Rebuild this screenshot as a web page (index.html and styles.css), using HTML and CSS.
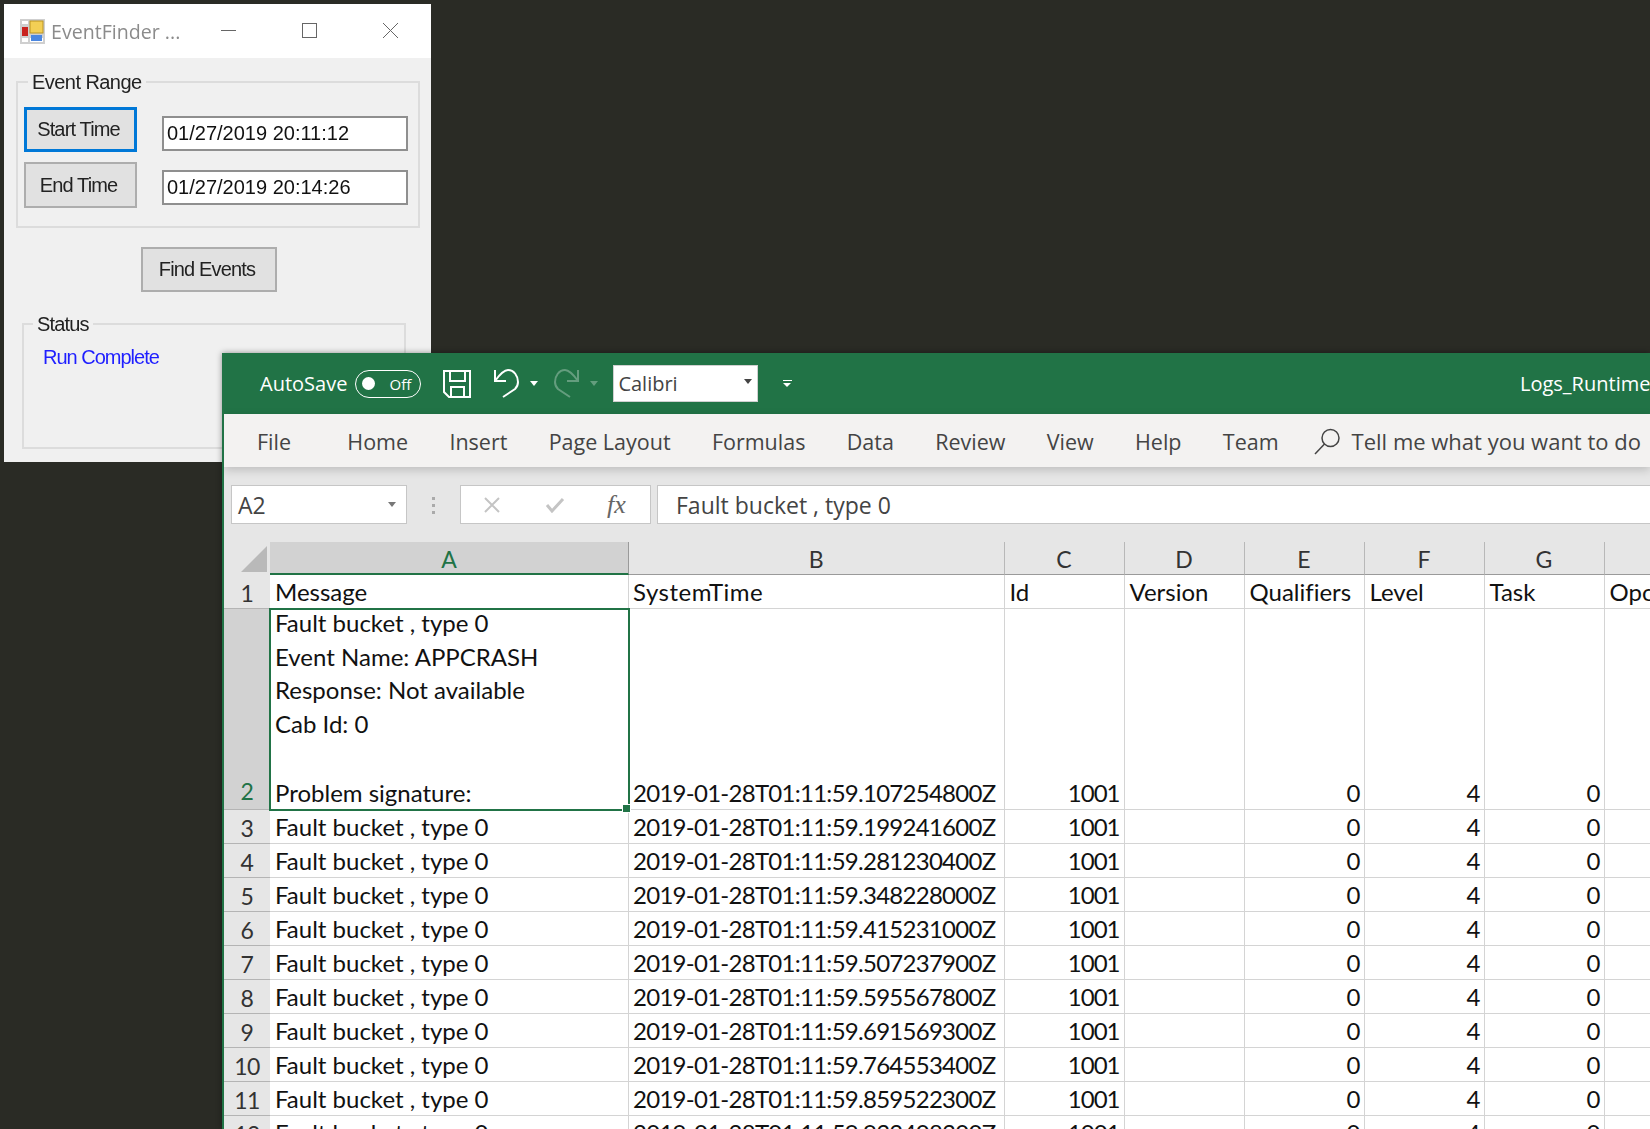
FILE: index.html
```html
<!DOCTYPE html>
<html lang="en">
<head>
<meta charset="utf-8">
<title>EventFinder and Excel</title>
<link rel="stylesheet" href="styles.css">
</head>
<body>
<section class="finder">
  <header class="finder-title">
    <svg class="finder-icon" viewBox="0 0 25 25" aria-hidden="true">
      <rect x="0" y="0" width="25" height="25" fill="#cfcfcf"/>
      <rect x="2" y="2" width="6" height="3" fill="#fff"/>
      <rect x="2" y="19" width="6" height="4" fill="#fff"/>
      <rect x="10" y="19" width="13" height="4" fill="#fff"/>
      <rect x="2" y="8" width="6" height="9" fill="#c9231f"/>
      <rect x="10" y="2" width="13" height="12" fill="#f3cf55" stroke="#bc9421"/>
      <rect x="11" y="16" width="11" height="6" fill="#4b86e0"/>
    </svg>
    <span class="finder-name">EventFinder ...</span>
    <span class="win-min"></span>
    <span class="win-max"></span>
    <svg class="win-close" viewBox="0 0 15 15" aria-hidden="true"><path d="M0 0L15 15M15 0L0 15"/></svg>
  </header>
  <div class="group group-range">
    <span class="legend legend-range">Event Range</span>
    <div class="range-grid">
      <button class="win-btn win-btn-focus">Start Time</button>
      <div class="date-box">01/27/2019 20:11:12</div>
      <button class="win-btn">End Time</button>
      <div class="date-box date-box-end">01/27/2019 20:14:26</div>
    </div>
  </div>
  <button class="win-btn find-btn">Find Events</button>
  <div class="group group-status">
    <span class="legend legend-status">Status</span>
    <p class="status-text">Run Complete</p>
  </div>
</section>

<section class="excel">
  <header class="xl-title">
    <span class="autosave">AutoSave</span>
    <span class="toggle"><i class="toggle-dot"></i><span>Off</span></span>
    <svg class="xl-save" viewBox="0 0 28 28" aria-hidden="true"><path d="M1 1H27V27H6L1 22ZM7 1V11H22V1M8 27V17H21V27"/></svg>
    <svg class="xl-undo" viewBox="0 0 27 29" aria-hidden="true"><path d="M2 1V12H13M2 12C7 5 11 1 15 1C21 1 25 7 25 13C25 16 24 18 22 20L10 28"/></svg>
    <i class="caret caret-white"></i>
    <svg class="xl-redo" viewBox="0 0 27 29" aria-hidden="true"><path d="M25 1V12H14M25 12C20 5 16 1 12 1C6 1 2 7 2 13C2 16 3 18 5 20L17 28"/></svg>
    <i class="caret caret-dim"></i>
    <div class="font-box"><span>Calibri</span><i class="caret caret-dark"></i></div>
    <div class="customize"><b></b><i class="caret caret-small"></i></div>
    <span class="doc-name">Logs_Runtime</span>
  </header>
  <nav class="xl-ribbon">
    <span class="tab tab-file">File</span>
    <span class="tab">Home</span>
    <span class="tab">Insert</span>
    <span class="tab">Page Layout</span>
    <span class="tab">Formulas</span>
    <span class="tab">Data</span>
    <span class="tab">Review</span>
    <span class="tab">View</span>
    <span class="tab">Help</span>
    <span class="tab">Team</span>
    <svg class="xl-search" viewBox="0 0 27 27" aria-hidden="true"><circle cx="16.5" cy="10" r="8.5"/><path d="M10.5 16L1 26"/></svg>
    <span class="tell">Tell me what you want to do</span>
  </nav>
  <div class="xl-formula">
    <div class="name-box"><span>A2</span><i class="caret caret-gray"></i></div>
    <div class="dots"><i></i><i></i><i></i></div>
    <div class="fx-box">
      <svg class="fx-x" viewBox="0 0 18 18" aria-hidden="true"><path d="M2 2L16 16M16 2L2 16"/></svg>
      <svg class="fx-check" viewBox="0 0 20 16" aria-hidden="true"><path d="M2 8L7 14L18 2"/></svg>
      <span class="fx">fx</span>
    </div>
    <div class="formula-input">Fault bucket , type 0</div>
  </div>
  <div class="sheet">
    <div class="corner"><i></i></div>
    <div class="col col-on">A</div><div class="col">B</div><div class="col">C</div><div class="col">D</div><div class="col">E</div><div class="col">F</div><div class="col">G</div><div class="col"></div>

    <div class="rh">1</div>
    <div class="c">Message</div><div class="c c-b c-sys">SystemTime</div><div class="c">Id</div><div class="c">Version</div><div class="c">Qualifiers</div><div class="c">Level</div><div class="c">Task</div><div class="c">Opc</div>

    <div class="rh rh-on">2</div>
    <div class="c c-sel">
      <div>Fault bucket , type 0</div>
      <div>Event Name: APPCRASH</div>
      <div>Response: Not available</div>
      <div>Cab Id: 0</div>
      <div class="blank"></div>
      <div>Problem signature:</div>
    </div>
    <div class="c c-b t">2019-01-28T01:11:59.107254800Z</div><div class="c n">1001</div><div class="c"></div><div class="c n">0</div><div class="c n">4</div><div class="c n">0</div><div class="c"></div>

    <div class="rh">3</div><div class="c">Fault bucket , type 0</div><div class="c c-b t">2019-01-28T01:11:59.199241600Z</div><div class="c n">1001</div><div class="c"></div><div class="c n">0</div><div class="c n">4</div><div class="c n">0</div><div class="c"></div>
    <div class="rh">4</div><div class="c">Fault bucket , type 0</div><div class="c c-b t">2019-01-28T01:11:59.281230400Z</div><div class="c n">1001</div><div class="c"></div><div class="c n">0</div><div class="c n">4</div><div class="c n">0</div><div class="c"></div>
    <div class="rh">5</div><div class="c">Fault bucket , type 0</div><div class="c c-b t">2019-01-28T01:11:59.348228000Z</div><div class="c n">1001</div><div class="c"></div><div class="c n">0</div><div class="c n">4</div><div class="c n">0</div><div class="c"></div>
    <div class="rh">6</div><div class="c">Fault bucket , type 0</div><div class="c c-b t">2019-01-28T01:11:59.415231000Z</div><div class="c n">1001</div><div class="c"></div><div class="c n">0</div><div class="c n">4</div><div class="c n">0</div><div class="c"></div>
    <div class="rh">7</div><div class="c">Fault bucket , type 0</div><div class="c c-b t">2019-01-28T01:11:59.507237900Z</div><div class="c n">1001</div><div class="c"></div><div class="c n">0</div><div class="c n">4</div><div class="c n">0</div><div class="c"></div>
    <div class="rh">8</div><div class="c">Fault bucket , type 0</div><div class="c c-b t">2019-01-28T01:11:59.595567800Z</div><div class="c n">1001</div><div class="c"></div><div class="c n">0</div><div class="c n">4</div><div class="c n">0</div><div class="c"></div>
    <div class="rh">9</div><div class="c">Fault bucket , type 0</div><div class="c c-b t">2019-01-28T01:11:59.691569300Z</div><div class="c n">1001</div><div class="c"></div><div class="c n">0</div><div class="c n">4</div><div class="c n">0</div><div class="c"></div>
    <div class="rh">10</div><div class="c">Fault bucket , type 0</div><div class="c c-b t">2019-01-28T01:11:59.764553400Z</div><div class="c n">1001</div><div class="c"></div><div class="c n">0</div><div class="c n">4</div><div class="c n">0</div><div class="c"></div>
    <div class="rh">11</div><div class="c">Fault bucket , type 0</div><div class="c c-b t">2019-01-28T01:11:59.859522300Z</div><div class="c n">1001</div><div class="c"></div><div class="c n">0</div><div class="c n">4</div><div class="c n">0</div><div class="c"></div>
    <div class="rh">12</div><div class="c">Fault bucket , type 0</div><div class="c c-b t">2019-01-28T01:11:59.932408300Z</div><div class="c n">1001</div><div class="c"></div><div class="c n">0</div><div class="c n">4</div><div class="c n">0</div><div class="c"></div>
  </div>
</section>
</body>
</html>
```
FILE: styles.css
```css
* { box-sizing: border-box; }
html, body { margin: 0; height: 100%; }
body { position: relative; width: 1650px; height: 1129px; overflow: hidden; background: #2a2b25; }

/* EventFinder window */
.finder { position: absolute; left: 4px; top: 4px; width: 427px; height: 458px; background: #f0f0f0; font-family: "Liberation Sans", Arial, sans-serif; font-size: 20px; letter-spacing: -.85px; color: #222; filter: blur(.35px); }
.finder-title { height: 54px; background: #fff; position: relative; display: flex; align-items: center; }
.finder-icon { width: 25px; height: 25px; margin-left: 16px; flex: none; }
.finder-name { margin-left: 6px; font-family: "Open Sans", sans-serif; font-size: 19.6px; letter-spacing: 0; color: #8b8b8b; white-space: nowrap; }
.win-min { position: absolute; left: 217px; top: 26px; width: 15px; height: 1px; background: #666; }
.win-max { position: absolute; left: 298px; top: 19px; width: 15px; height: 15px; border: 1px solid #666; }
.win-close { position: absolute; left: 379px; top: 19px; width: 15px; height: 15px; fill: none; stroke: #666; stroke-width: 1; }
.group { position: relative; border: 2px solid #dcdcdc; }
.legend { position: absolute; top: -15px; background: #f0f0f0; padding: 0 4px; line-height: 28px; }
.group-range { margin: 23px 0 0 12px; width: 404px; height: 147px; padding: 24px 0 0 6px; }
.legend-range { left: 10px; letter-spacing: -.55px; }
.legend-status { left: 9px; }
.range-grid { display: grid; grid-template-columns: 113px 246px; column-gap: 25px; row-gap: 10px; grid-template-rows: 45px 46px; }
.win-btn { display: block; width: 100%; height: 100%; padding: 0 4px 0 0; background: #e1e1e1; border: 2px solid #adadad; font: inherit; letter-spacing: inherit; color: #222; }
.win-btn-focus { border: 3px solid #0078d7; }
.date-box { height: 35px; margin-top: 9px; background: #fff; border: 2px solid #8f8f8f; padding-left: 3px; line-height: 31px; letter-spacing: 0; color: #111; white-space: nowrap; }
.date-box-end { margin-top: 8px; }
.find-btn { width: 136px; height: 45px; margin: 19px 0 0 137px; }
.group-status { margin: 31px 0 0 18px; width: 384px; height: 126px; }
.status-text { margin: 0; padding: 18px 0 0 19px; color: #1f1fff; line-height: 28px; letter-spacing: -1px; }

/* Excel window */
.excel { position: absolute; left: 222px; top: 353px; width: 1428px; height: 776px; overflow: hidden; border-left: 2px solid #217346; background: #fff; box-shadow: 0 0 6px rgba(0,0,0,.4); }
.xl-title { height: 61px; background: #217346; color: #fff; display: flex; align-items: center; font-family: "Open Sans", sans-serif; font-size: 20px; position: relative; }
.autosave { margin-left: 36px; white-space: nowrap; }
.toggle { margin-left: 8px; width: 66px; height: 28px; border: 1.5px solid #fff; border-radius: 14px; display: flex; align-items: center; justify-content: space-between; padding: 0 9px 0 6px; font-size: 15px; }
.toggle-dot { width: 13px; height: 13px; background: #fff; border-radius: 50%; }
.xl-save { width: 28px; height: 28px; margin-left: 22px; fill: none; stroke: #fff; stroke-width: 2; }
.xl-undo, .xl-redo { width: 27px; height: 29px; fill: none; stroke: #fff; stroke-width: 2; }
.xl-undo { margin-left: 22px; }
.xl-redo { margin-left: 15px; opacity: .3; }
.caret { display: block; width: 0; height: 0; border-style: solid; border-color: #fff transparent transparent; border-width: 5px 4.5px 0; }
.caret-white { margin-left: 10px; }
.caret-dim { margin-left: 10px; opacity: .3; }
.font-box { margin-left: 15px; width: 145px; height: 37px; background: #fff; border: 1px solid #d0d0d0; display: flex; align-items: center; justify-content: space-between; padding: 0 5px 0 4px; color: #444; font-size: 20px; }
.caret-dark { border-top-color: #444; margin-top: -4px; }
.customize { margin-left: 25px; width: 9px; }
.customize b { display: block; height: 1px; background: #fff; margin-bottom: 2px; }
.caret-small { border-width: 4px 4px 0; }
.doc-name { position: absolute; left: 1296px; white-space: nowrap; }

.xl-ribbon { height: 53px; background: #f3f2f1; display: flex; align-items: center; padding-top: 1px; font-family: "Open Sans", sans-serif; font-size: 21.5px; color: #444; position: relative; box-shadow: 0 3px 9px rgba(0,0,0,.18); white-space: nowrap; }
.tab { margin-left: 41.3px; flex: none; }
.tab-file { margin-left: 33px; margin-right: 15px; }
.xl-search { width: 27px; height: 27px; margin-left: 35px; flex: none; fill: none; stroke: #444; stroke-width: 1.5; }
.tell { margin-left: 11px; font-size: 22px; flex: none; }

.xl-formula { height: 75px; background: #e6e6e6; display: flex; align-items: flex-start; padding: 18px 0 0 7px; font-family: "Open Sans", sans-serif; font-size: 23px; color: #444; }
.name-box, .fx-box, .formula-input { height: 39px; background: #fff; border: 1px solid #c6c6c6; display: flex; align-items: center; }
.name-box { width: 176px; justify-content: space-between; padding: 0 10px 0 6px; }
.caret-gray { border-top-color: #777; }
.dots { width: 53px; display: flex; flex-direction: column; align-items: center; gap: 4px; padding-top: 12px; }
.dots i { width: 3px; height: 3px; background: #aaa; }
.fx-box { width: 191px; position: relative; }
.fx-x { width: 18px; height: 18px; margin-left: 22px; fill: none; stroke: #c4c4c4; stroke-width: 2; }
.fx-check { width: 20px; height: 16px; margin-left: 44px; fill: none; stroke: #c4c4c4; stroke-width: 3; }
.fx { margin-left: 42px; font-family: "Liberation Serif", serif; font-style: italic; font-size: 26px; color: #666; }
.formula-input { flex: 1; margin: 0 -10px 0 6px; padding-left: 18px; white-space: nowrap; }

.sheet { display: grid; grid-template-columns: 46px 359px 375.5px 120px 120px 120px 120px 120px 120px; grid-template-rows: 33px 34px 201px repeat(11, 34px); background: #fff; font-family: Lato, sans-serif; font-size: 24px; font-variant-ligatures: none; color: #111; }
.corner { background: #e6e6e6; position: relative; }
.corner i { display: block; position: absolute; left: 17px; top: 4px; width: 26px; height: 26px; background: #b9b9b9; clip-path: polygon(100% 0, 100% 100%, 0 100%); }
.col { background: #e6e6e6; border-bottom: 1px solid #9a9a9a; border-right: 1px solid #b8b8b8; text-align: center; font-size: 23px; line-height: 34px; color: #333; }
.col-on { background: #d2d2d2; color: #217346; border-bottom: 2px solid #217346; border-right-color: #9a9a9a; }
.rh { background: #e6e6e6; border-bottom: 1px solid #b4b4b4; text-align: center; font-size: 23px; letter-spacing: -.5px; line-height: 36px; color: #333; }
.rh-on { background: #d2d2d2; color: #217346; display: flex; align-items: flex-end; justify-content: center; line-height: 35px; }
.c { border-right: 1px solid #d4d4d4; border-bottom: 1px solid #d4d4d4; padding: 0 4px 0 5px; line-height: 33.5px; white-space: nowrap; display: flex; flex-direction: column; justify-content: flex-end; overflow: hidden; }
.c-b { padding-left: 4px; }
.c-sys { letter-spacing: .5px; }
.t { letter-spacing: -.73px; }
.n { text-align: right; letter-spacing: -1px; }
.c-sel { display: block; position: relative; overflow: visible; outline: 2px solid #217346; outline-offset: -1px; z-index: 1; margin: 0; }
.blank { height: 35.5px; }
.c-sel div:first-child { margin-top: -3px; }
.c-sel::after { content: ""; position: absolute; right: -3px; bottom: -4px; width: 7px; height: 7px; background: #217346; border: 1px solid #fff; }
```
